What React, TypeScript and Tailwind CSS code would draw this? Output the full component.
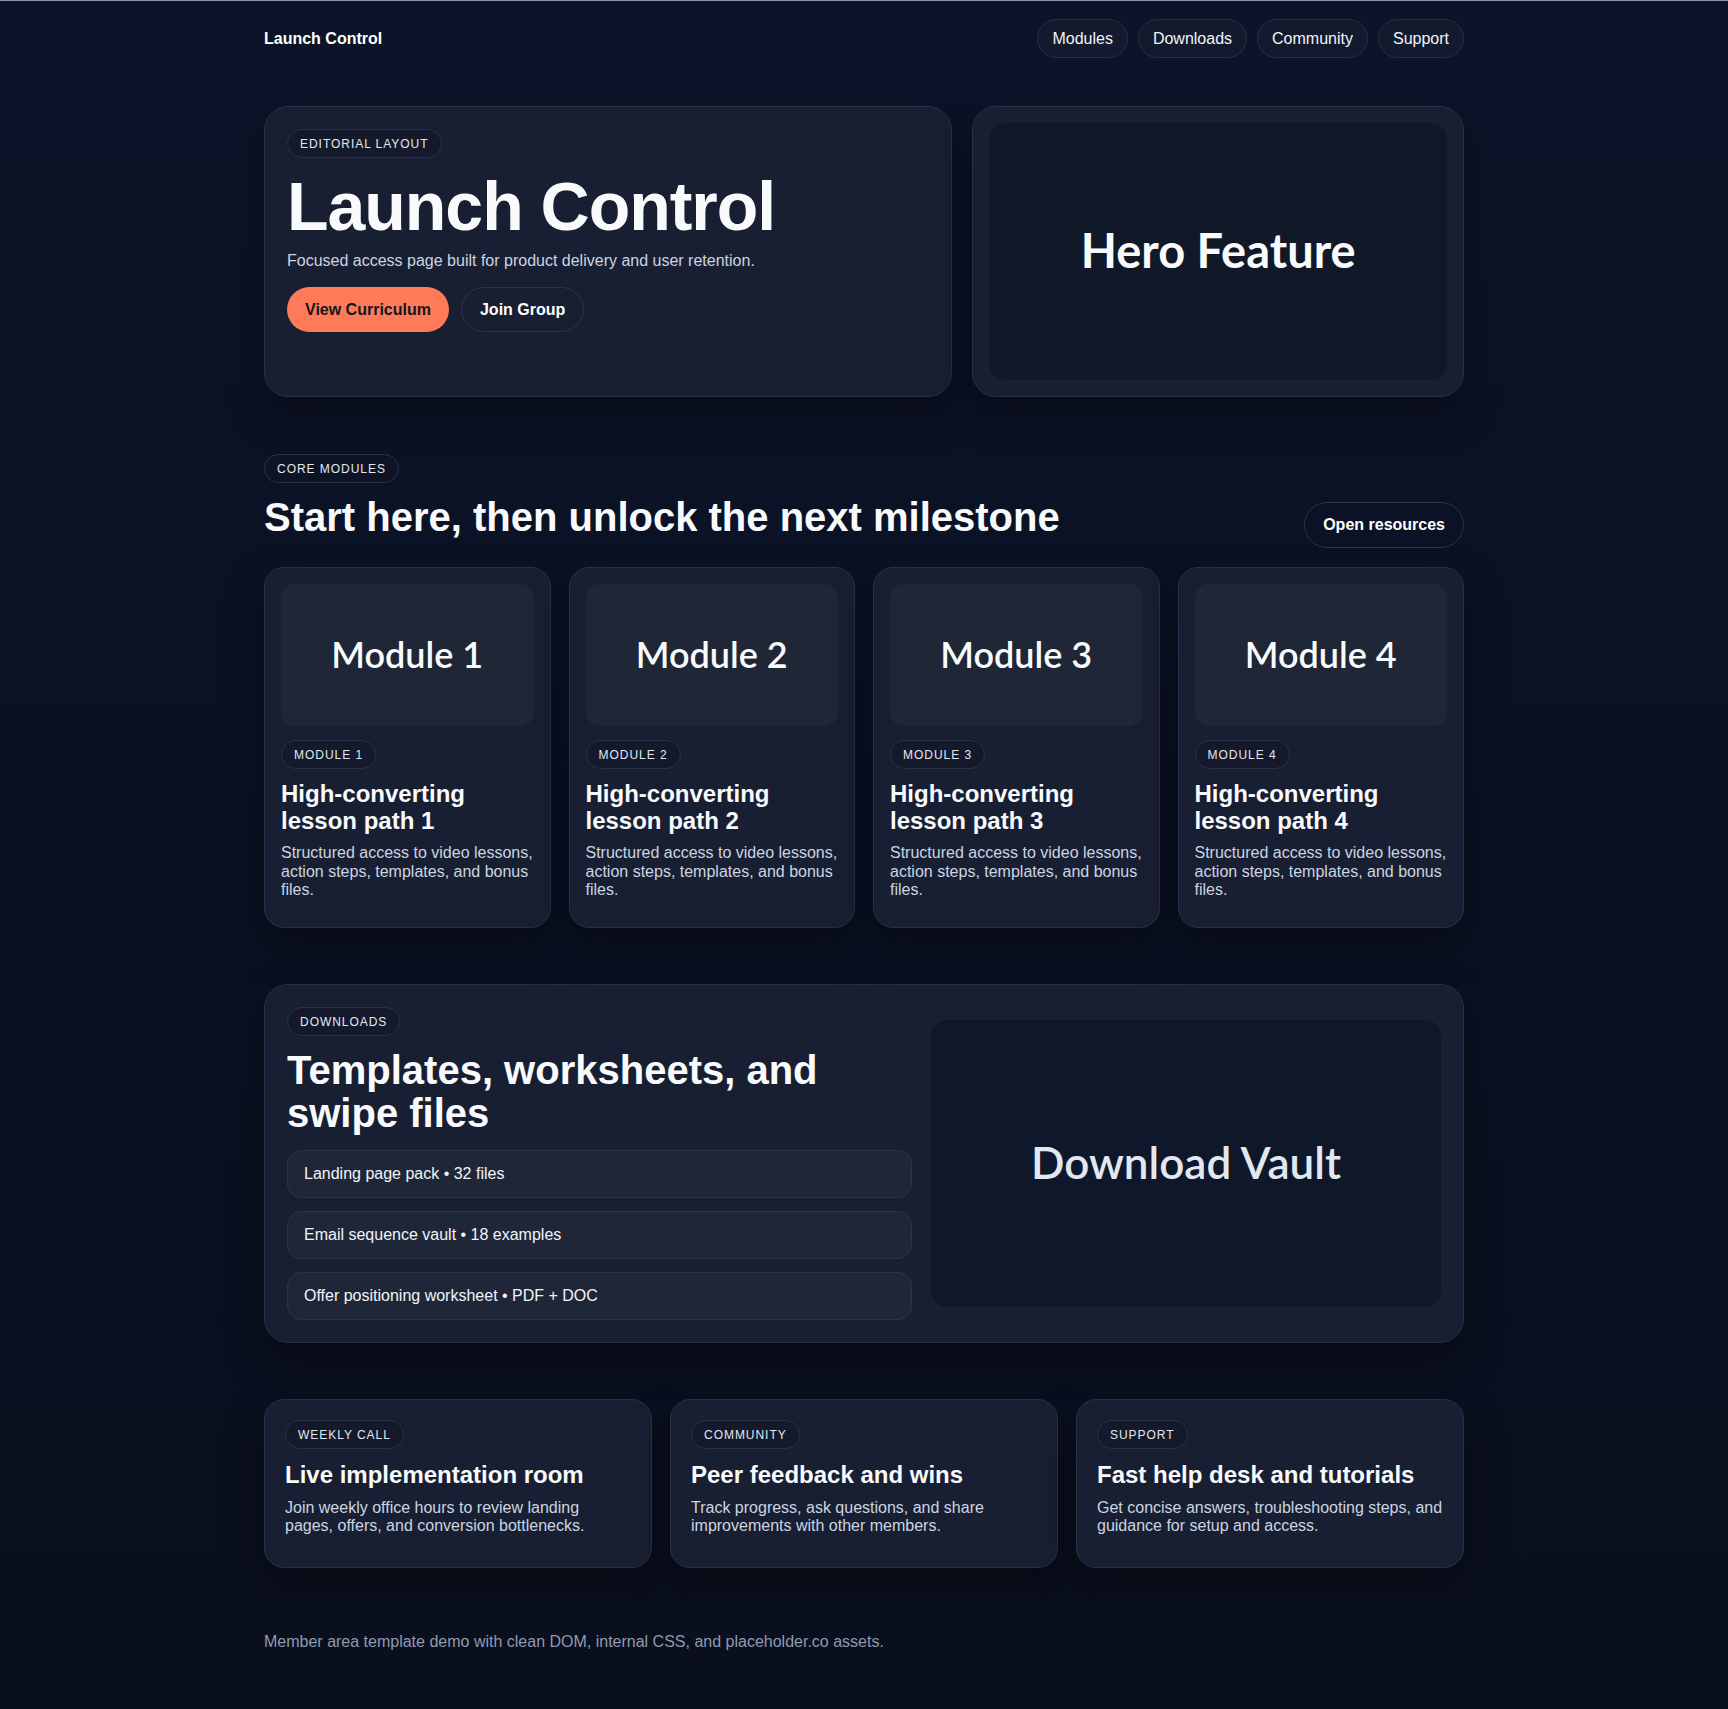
import React from "react";

const sans = "font-['Liberation_Sans',Arial,Helvetica,sans-serif]";
const lato = "font-['Lato','Noto_Sans',sans-serif]";

const navLinks = ["Modules", "Downloads", "Community", "Support"];

const modules = [1, 2, 3, 4].map((n) => ({
  n,
  title: `High-converting lesson path ${n}`,
  text: "Structured access to video lessons, action steps, templates, and bonus files.",
}));

const downloads = [
  "Landing page pack • 32 files",
  "Email sequence vault • 18 examples",
  "Offer positioning worksheet • PDF + DOC",
];

const extras = [
  {
    tag: "Weekly call",
    title: "Live implementation room",
    text: "Join weekly office hours to review landing pages, offers, and conversion bottlenecks.",
  },
  {
    tag: "Community",
    title: "Peer feedback and wins",
    text: "Track progress, ask questions, and share improvements with other members.",
  },
  {
    tag: "Support",
    title: "Fast help desk and tutorials",
    text: "Get concise answers, troubleshooting steps, and guidance for setup and access.",
  },
];

function Tag({ children }: { children: React.ReactNode }) {
  return (
    <span className="inline-flex self-start items-center h-[29px] px-3 rounded-full border border-[#2a3248] bg-[#0f1526]/50 text-[12px] leading-none uppercase tracking-[0.08em] text-[#e2e8f0]">
      {children}
    </span>
  );
}

const card =
  "border border-[#283046] bg-[#191f32] shadow-[0_18px_40px_rgba(0,0,0,0.35)]";

export default function App() {
  return (
    <div
      className={`${sans} min-h-screen border-t border-[#8b93a7] bg-[linear-gradient(180deg,#0d1429_0%,#0b1122_55%,#0a0f1d_100%)] text-white`}
    >
      <div className="max-w-[1200px] mx-auto pt-[18px] pb-[60px]">
        {/* nav */}
        <header className="flex items-center justify-between h-[39px]">
          <span className="text-base font-bold leading-none">Launch Control</span>
          <nav className="flex gap-[10px]">
            {navLinks.map((l) => (
              <a
                key={l}
                className="h-[39px] px-[14px] flex items-center rounded-full border border-[#283046] bg-[#141a2d] text-base text-[#f1f5f9]"
              >
                {l}
              </a>
            ))}
          </nav>
        </header>

        {/* hero */}
        <section className="mt-[48px] grid grid-cols-[1.4fr_1fr] gap-5">
          <div className={`${card} rounded-[24px] p-[22px] flex flex-col`}>
            <Tag>Editorial layout</Tag>
            <h1 className="mt-[14px] text-[68px] leading-none font-bold tracking-[-0.015em] text-[#f8fafc]">
              Launch Control
            </h1>
            <p className="mt-[12px] text-base leading-[1.15] text-[#cbd5e1]">
              Focused access page built for product delivery and user retention.
            </p>
            <div className="mt-[17px] flex gap-3">
              <button className="h-[45px] px-[17px] rounded-full border border-transparent bg-[#ff7a59] text-[#14161c] text-base font-bold">
                View Curriculum
              </button>
              <button className="h-[45px] px-[18px] rounded-full border border-[#2c3449] text-white text-base font-bold">
                Join Group
              </button>
            </div>
          </div>
          <div className={`${card} rounded-[24px] p-4`}>
            <div className="aspect-video rounded-[16px] bg-[#111827] flex items-center justify-center">
              <span className={`${lato} text-[47px] font-bold text-[#f8fafc] -mt-[3px]`}>Hero Feature</span>
            </div>
          </div>
        </section>

        {/* core modules */}
        <section className="mt-[57px]">
          <div className="flex items-end justify-between">
            <div className="flex flex-col">
              <Tag>Core modules</Tag>
              <h2 className="mt-[12px] mb-[9px] text-[40px] leading-[1.1] font-bold text-[#f8fafc]">
                Start here, then unlock the next milestone
              </h2>
            </div>
            <button className="h-[46px] px-[18px] rounded-full border border-[#2c3449] text-white text-base font-bold">
              Open resources
            </button>
          </div>
          <div className="mt-[19px] grid grid-cols-4 gap-[18px]">
            {modules.map((m) => (
              <div key={m.n} className={`${card} rounded-[20px] p-4 pb-[28px] flex flex-col`}>
                <div className="aspect-video rounded-[14px] bg-[#1f2737] flex items-center justify-center">
                  <span className={`${lato} text-[36px] font-semibold text-[#f8fafc] -mt-[3px]`}>
                    Module {m.n}
                  </span>
                </div>
                <div className="mt-[14px] flex">
                  <Tag>Module {m.n}</Tag>
                </div>
                <h3 className="mt-[12px] text-2xl leading-[1.1] font-bold text-[#f8fafc]">{m.title}</h3>
                <p className="mt-[10px] text-base leading-[1.15] text-[#cbd5e1]">{m.text}</p>
              </div>
            ))}
          </div>
        </section>

        {/* downloads */}
        <section
          className={`${card} mt-[56px] rounded-[24px] p-[22px] grid grid-cols-[625px_1fr] gap-[19px] items-center`}
        >
          <div className="flex flex-col">
            <Tag>Downloads</Tag>
            <h2 className="mt-[13px] text-[40px] leading-[1.075] font-bold text-[#f8fafc]">
              Templates, worksheets, and swipe files
            </h2>
            <ul className="mt-[15px] flex flex-col gap-[13px]">
              {downloads.map((d) => (
                <li
                  key={d}
                  className="h-[48px] px-4 flex items-center rounded-[14px] border border-[#2c3449] bg-[#1f2638] text-base text-[#f1f5f9]"
                >
                  {d}
                </li>
              ))}
            </ul>
          </div>
          <div className="aspect-video rounded-[16px] bg-[#0f172a] flex items-center justify-center">
            <span className={`${lato} text-[44px] font-semibold text-[#e2e8f0] -mt-[3px]`}>Download Vault</span>
          </div>
        </section>

        {/* extras */}
        <section className="mt-[56px] grid grid-cols-3 gap-[18px]">
          {extras.map((e) => (
            <div key={e.tag} className={`${card} rounded-[20px] p-[20px] flex flex-col`}>
              <Tag>{e.tag}</Tag>
              <h3 className="mt-[13px] text-2xl leading-[1.1] font-bold text-[#f8fafc]">{e.title}</h3>
              <p className="mt-[10px] mb-[11px] text-base leading-[1.15] text-[#cbd5e1]">{e.text}</p>
            </div>
          ))}
        </section>

        <footer className="mt-[65px] text-base leading-[1.15] text-[#8f9ab0]">
          Member area template demo with clean DOM, internal CSS, and placeholder.co assets.
        </footer>
      </div>
    </div>
  );
}
